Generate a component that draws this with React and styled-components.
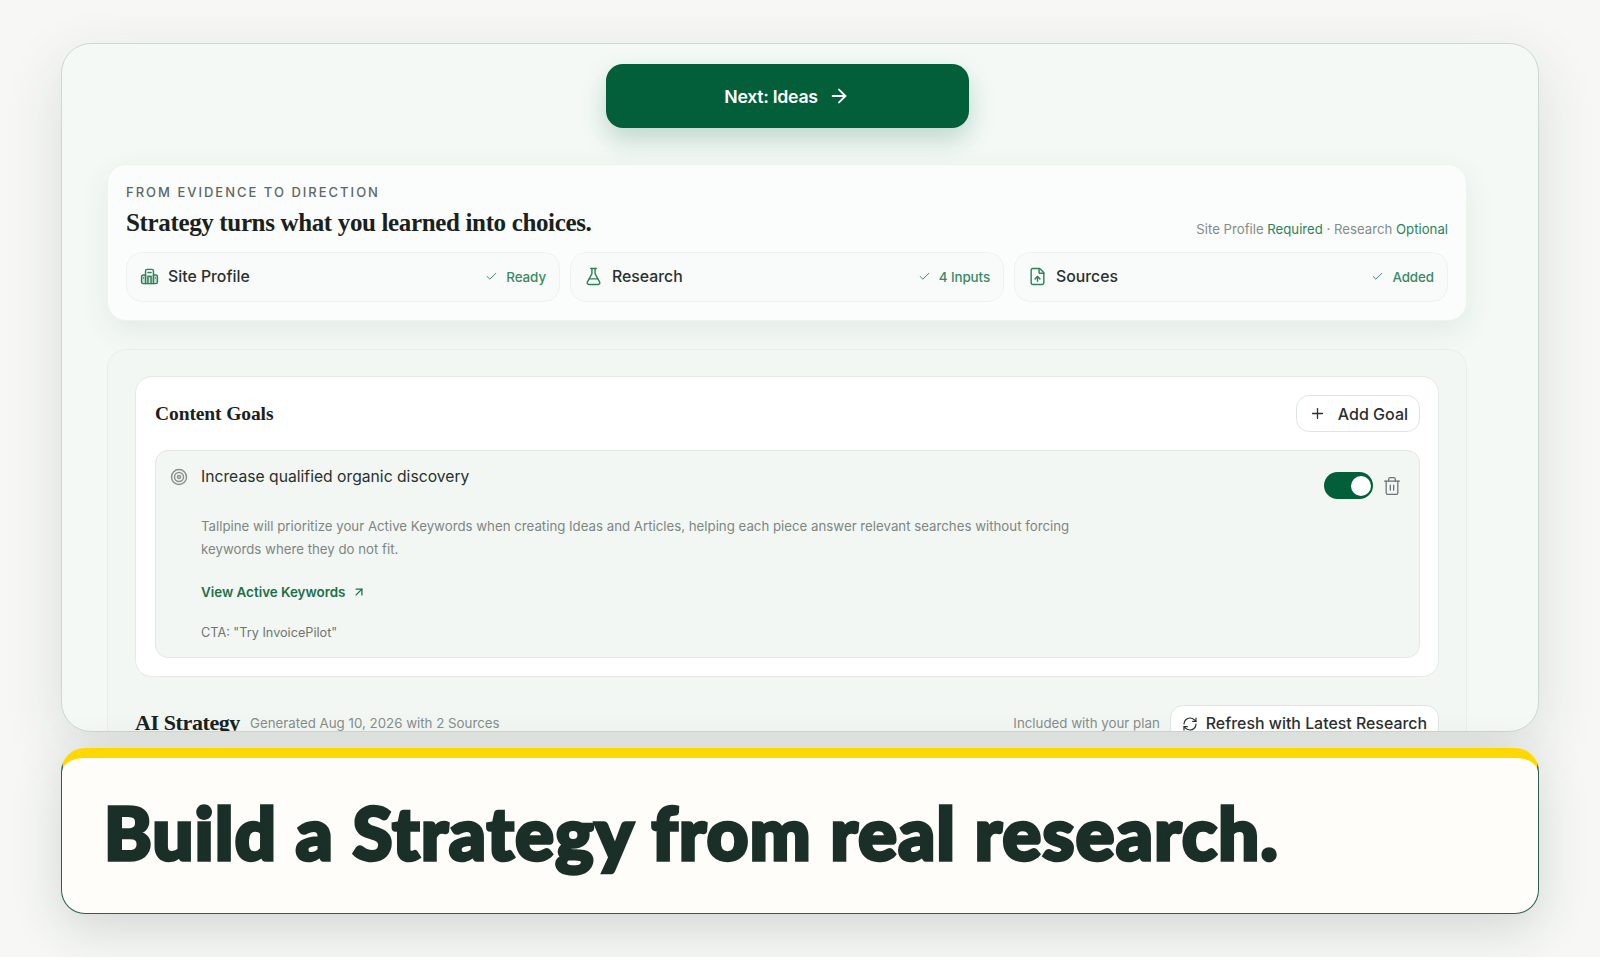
import React from "react";
import styled, { createGlobalStyle } from "styled-components";
import {
  ArrowRight,
  ArrowUpRight,
  Check,
  FileUp,
  FlaskConical,
  Plus,
  RefreshCw,
  Target,
  Trash2,
} from "lucide-react";

const SANS = `"Inter", "Liberation Sans", sans-serif`;
const SERIF = `"Liberation Serif", serif`;
const GREEN = "#035f39";

// lucide has no building with side wings like this one
const BuildingIcon = ({ size, strokeWidth }) => (
  <svg
    width={size}
    height={size}
    viewBox="0 0 24 24"
    fill="none"
    stroke="currentColor"
    strokeWidth={strokeWidth}
    strokeLinecap="round"
    strokeLinejoin="round"
  >
    <path
      d="M7 10H4a2 2 0 0 0-2 2v7a2 2 0 0 0 2 2h16a2 2 0 0 0 2-2v-7a2 2 0 0 0-2-2h-3"
      fill="currentColor"
      fillOpacity="0.22"
    />
    <path d="M7 21V5a2 2 0 0 1 2-2h6a2 2 0 0 1 2 2v16" />
    <path d="M10 7h4" />
    <path d="M10 21v-9h4v9" />
    <path d="M4.5 14h0M19.5 14h0" />
  </svg>
);

const sources = [
  { name: "Site Profile", status: "Ready", Icon: BuildingIcon },
  { name: "Research", status: "4 Inputs", Icon: FlaskConical },
  { name: "Sources", status: "Added", Icon: FileUp },
];

const App = () => {
  return (
    <Page>
      <GlobalStyle />
      <Window>
        <NextButton>
          Next: Ideas
          <ArrowRight size={22} strokeWidth={2} />
        </NextButton>

        <Hero>
          <Eyebrow>FROM EVIDENCE TO DIRECTION</Eyebrow>
          <HeroTitleRow>
            <HeroTitle>Strategy turns what you learned into choices.</HeroTitle>
            <Requirements>
              Site Profile <em>Required</em> · Research <em>Optional</em>
            </Requirements>
          </HeroTitleRow>
          <Chips>
            {sources.map(({ name, status, Icon }) => (
              <Chip key={name}>
                <ChipIcon>
                  <Icon size={19} strokeWidth={1.8} />
                </ChipIcon>
                <ChipName>{name}</ChipName>
                <ChipStatus>
                  <Check size={13} strokeWidth={1.8} />
                  {status}
                </ChipStatus>
              </Chip>
            ))}
          </Chips>
        </Hero>

        <Workspace>
          <GoalsCard>
            <GoalsHeader>
              <GoalsTitle>Content Goals</GoalsTitle>
              <AddGoal>
                <Plus size={17} strokeWidth={1.8} />
                Add Goal
              </AddGoal>
            </GoalsHeader>
            <Goal>
              <GoalIcon>
                <Target size={18} strokeWidth={2} />
              </GoalIcon>
              <GoalBody>
                <GoalName>Increase qualified organic discovery</GoalName>
                <GoalText>
                  Tallpine will prioritize your Active Keywords when creating Ideas and
                  Articles, helping each piece answer relevant searches without forcing
                  keywords where they do not fit.
                </GoalText>
                <GoalLink>
                  View Active Keywords
                  <ArrowUpRight size={14} strokeWidth={2.2} />
                </GoalLink>
                <GoalCta>CTA: "Try InvoicePilot"</GoalCta>
              </GoalBody>
              <GoalActions>
                <Toggle />
                <TrashButton>
                  <Trash2 size={20} strokeWidth={1.5} />
                </TrashButton>
              </GoalActions>
            </Goal>
          </GoalsCard>

          <StrategyRow>
            <StrategyTitle>AI Strategy</StrategyTitle>
            <StrategyMeta>Generated Aug 10, 2026 with 2 Sources</StrategyMeta>
            <PlanNote>Included with your plan</PlanNote>
            <RefreshButton>
              <RefreshCw size={16} strokeWidth={1.8} />
              Refresh with Latest Research
            </RefreshButton>
          </StrategyRow>
        </Workspace>
      </Window>

      <Banner>
        <BannerText>Build a Strategy from real research.</BannerText>
      </Banner>
    </Page>
  );
};

const GlobalStyle = createGlobalStyle`
  html, body {
    margin: 0;
    height: 100%;
    background: #f7f8f6;
  }
  * {
    box-sizing: border-box;
  }
`;

const Page = styled.div`
  width: 1600px;
  height: 957px;
  overflow: hidden;
  padding: 43px 61px 0;
  font-family: ${SANS};
  background: #f7f8f6;
`;

const Window = styled.div`
  height: 689px;
  overflow: hidden;
  padding: 20px 71px 0 45px;
  background: #f4f9f6;
  border: 1px solid #cbd9d3;
  border-radius: 30px;
  box-shadow: 0 20px 60px rgba(30, 50, 40, 0.13);
`;

const NextButton = styled.button`
  display: flex;
  align-items: center;
  justify-content: center;
  gap: 10px;
  width: 363px;
  height: 64px;
  margin: 0 auto 36px;
  border: none;
  border-radius: 17px;
  background: ${GREEN};
  color: #fff;
  font-family: ${SANS};
  font-size: 17.7px;
  font-weight: 600;
  letter-spacing: -0.3px;
  box-shadow: 0 12px 26px rgba(5, 98, 59, 0.22);
`;

const Hero = styled.section`
  height: 157px;
  padding: 20px 18px 0;
  background: #fafdfb;
  border: 1px solid #eef3f0;
  border-radius: 19px;
  box-shadow: 0 10px 30px rgba(40, 60, 50, 0.08);
`;

const Eyebrow = styled.div`
  font-size: 13px;
  font-weight: 500;
  line-height: 15px;
  letter-spacing: 2px;
  color: #5f6763;
`;

const HeroTitleRow = styled.div`
  display: flex;
  align-items: flex-end;
  justify-content: space-between;
  height: 32px;
  margin: 7px 0 13px;
`;

const HeroTitle = styled.h1`
  margin: 0;
  font-family: ${SERIF};
  font-size: 25px;
  font-weight: 700;
  line-height: 32px;
  letter-spacing: -0.35px;
  color: #1a211d;
`;

const Requirements = styled.div`
  margin-bottom: 1px;
  font-size: 13.2px;
  line-height: 18px;
  color: #858c88;

  em {
    font-style: normal;
    color: #2e8259;
  }
`;

const Chips = styled.div`
  display: grid;
  grid-template-columns: repeat(3, 1fr);
  gap: 10px;
`;

const Chip = styled.div`
  display: flex;
  align-items: center;
  height: 50px;
  padding: 0 13px 1px 13px;
  background: #f9fbfa;
  border: 1px solid #eef2ef;
  border-radius: 16px;
`;

const ChipIcon = styled.span`
  display: flex;
  margin-right: 9px;
  color: #2e8259;
`;

const ChipName = styled.span`
  flex: 1;
  font-size: 15.8px;
  font-weight: 500;
  color: #2a302d;
`;

const ChipStatus = styled.span`
  display: flex;
  align-items: center;
  gap: 8px;
  font-size: 13.4px;
  font-weight: 500;
  letter-spacing: -0.1px;
  color: #3a8a63;
`;

const Workspace = styled.section`
  height: 400px;
  margin-top: 28px;
  padding: 26px 27px 0;
  border: 1px solid #e8efeb;
  border-bottom: none;
  border-radius: 19px 19px 0 0;
  background: #f2f7f4;
`;

const GoalsCard = styled.div`
  height: 301px;
  padding: 18px 18px 0 19px;
  background: #fff;
  border: 1px solid #e4eae7;
  border-radius: 17px;
`;

const GoalsHeader = styled.div`
  display: flex;
  align-items: center;
  justify-content: space-between;
  height: 37px;
  margin-bottom: 18px;
`;

const GoalsTitle = styled.h2`
  margin: 0;
  font-family: ${SERIF};
  font-size: 19.5px;
  font-weight: 700;
  letter-spacing: -0.1px;
  color: #1a211d;
`;

const AddGoal = styled.button`
  display: flex;
  align-items: center;
  gap: 12px;
  height: 37px;
  padding: 0 11px 0 12px;
  background: #fff;
  border: 1px solid #dfe5e2;
  border-radius: 13px;
  font-family: ${SANS};
  font-size: 16px;
  font-weight: 500;
  color: #2a302d;
`;

const Goal = styled.div`
  display: flex;
  height: 208px;
  padding: 16px 17px 0 14px;
  background: #f2f7f4;
  border: 1px solid #e2e8e5;
  border-radius: 13px;
`;

const GoalIcon = styled.span`
  display: flex;
  height: 18px;
  margin-right: 13px;
  padding-top: 1px;
  color: #8b918e;
`;

const GoalBody = styled.div`
  flex: 1;
`;

const GoalName = styled.div`
  font-size: 15.7px;
  line-height: 20px;
  color: #2a302d;
`;

const GoalText = styled.p`
  width: 885px;
  margin: 28px 0 0;
  font-size: 13.25px;
  line-height: 22.5px;
  color: #7e8682;
`;

const GoalLink = styled.a`
  display: flex;
  align-items: center;
  gap: 7px;
  margin-top: 23px;
  font-size: 13.4px;
  font-weight: 600;
  line-height: 18px;
  color: #1c7049;
`;

const GoalCta = styled.div`
  margin-top: 23px;
  font-size: 12.7px;
  line-height: 18px;
  color: #6e7672;
`;

const GoalActions = styled.div`
  display: flex;
  align-items: center;
  gap: 9px;
  height: 27px;
  margin-top: 5px;
`;

const Toggle = styled.span`
  position: relative;
  display: block;
  width: 49px;
  height: 27px;
  border-radius: 14px;
  background: ${GREEN};

  &::after {
    content: "";
    position: absolute;
    top: 3.5px;
    right: 2px;
    width: 20px;
    height: 20px;
    border-radius: 50%;
    background: #fff;
  }
`;

const TrashButton = styled.span`
  display: flex;
  color: #6a7274;
`;

const StrategyRow = styled.div`
  display: flex;
  align-items: flex-start;
  margin-top: 28px;
`;

const StrategyTitle = styled.h2`
  margin: 5px 10px 0 0;
  font-family: ${SERIF};
  font-size: 22px;
  font-weight: 700;
  line-height: 26px;
  letter-spacing: -0.4px;
  color: #1a211d;
`;

const StrategyMeta = styled.span`
  flex: 1;
  margin-top: 9px;
  font-size: 13.3px;
  line-height: 18px;
  color: #858c88;
`;

const PlanNote = styled.span`
  margin: 9px 10px 0 0;
  font-size: 13.3px;
  line-height: 18px;
  color: #858c88;
`;

const RefreshButton = styled.button`
  display: flex;
  align-items: center;
  gap: 8px;
  height: 37px;
  padding: 0 11px;
  background: #fff;
  border: 1px solid #dfe5e2;
  border-radius: 13px;
  font-family: ${SANS};
  font-size: 15.9px;
  font-weight: 500;
  color: #2a302d;
`;

const Banner = styled.section`
  display: flex;
  align-items: center;
  height: 166px;
  margin-top: 16px;
  padding: 0 0 7px 42px;
  background: #fefdf9;
  border: 1px solid #2f5f4c;
  border-top: 10px solid #ffd800;
  border-radius: 24px;
  box-shadow: 0 14px 50px rgba(30, 50, 40, 0.17);
`;

const BannerText = styled.div`
  font-family: "Lato", "Inter", sans-serif;
  font-size: 72px;
  font-weight: 900;
  line-height: 1;
  letter-spacing: 1.45px;
  color: #1a2f28;
  -webkit-text-stroke: 3.5px #1a2f28;
`;

export default App;
